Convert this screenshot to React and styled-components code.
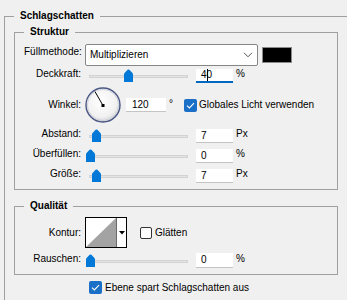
import styled, {createGlobalStyle} from "styled-components";

const GlobalStyle = createGlobalStyle`
  html, body {
    margin: 0;
    background: #f0f0f0;
    overflow: hidden;
  }
  body {
    font-family: "Liberation Sans", Arial, sans-serif;
    font-size: 10px;
    color: #000;
  }
`

const Page = styled.div`
  padding: 10px 0 0 4px;
  height: 300px;
  box-sizing: border-box;
`

const Group = styled.fieldset`
  box-sizing: border-box;
  margin: ${props => props.$gap || 0}px 0 0 0;
  padding: ${props => props.$pt}px 9px ${props => props.$pb}px 9px;
  border: 1px solid #a0a0a0;
  width: ${props => props.$width}px;
  min-width: 0;
`

// outer box runs off the right and bottom of the window
const OuterGroup = styled(Group)`
  border-right: none;
  border-bottom: none;
  height: 290px;
`

const Title = styled.legend`
  padding: 0 6px;
  font-weight: bold;
  line-height: 12px;
  font-size: 10px;
`

const Row = styled.div`
  display: flex;
  align-items: center;
  height: ${props => props.$h}px;
  margin-top: ${props => props.$mt || 0}px;
`

const Label = styled.div`
  width: 57px;
  margin-right: 4px;
  text-align: right;
  line-height: 12px;
  white-space: nowrap;
  align-self: ${props => props.$top ? "flex-start" : "center"};
  padding-top: ${props => props.$top ? 2 : 0}px;
  padding-bottom: ${props => props.$shift ? 4 : 0}px;
`

const Select = styled.div`
  box-sizing: border-box;
  width: 173px;
  height: 22px;
  border: 1px solid #868686;
  border-radius: 2px;
  background: #fff;
  display: flex;
  align-items: center;
  justify-content: space-between;
  padding: 0 4px 0 4px;
  line-height: 12px;
`

const Swatch = styled.div`
  box-sizing: border-box;
  width: 30px;
  height: 16px;
  margin-left: 4px;
  border: 1px solid #8a8a8a;
  background: #000;
`

const SliderBox = styled.div`
  position: relative;
  width: 104px;
  height: 14px;
  margin-left: 1px;
`

const Track = styled.div`
  position: absolute;
  left: 3px;
  right: 2px;
  top: 6px;
  height: 3px;
  box-sizing: border-box;
  background: #e4e4e4;
  border: 1px solid #d2d2d2;
`

const Thumb = styled.svg`
  position: absolute;
  top: 0;
  width: 9px;
  height: 13px;
`

const Field = styled.div`
  box-sizing: border-box;
  width: ${props => props.$w}px;
  height: ${props => props.$h || 14}px;
  margin-left: ${props => props.$ml}px;
  background: #fff;
  border-bottom: ${props => props.$focus ? "2px solid #0067c0" : "1px solid #c4c4c4"};
  padding-left: ${props => props.$pl || 5}px;
  line-height: 14px;
  display: flex;
  align-items: center;
  white-space: nowrap;
`

const Caret = styled.span`
  display: inline-block;
  width: 1px;
  height: 12px;
  margin: 0 -1px 0 0;
  background: #000;
`

const Unit = styled.div`
  margin-left: 3px;
  line-height: 12px;
  padding-bottom: ${props => props.$raise ?? 4}px;
`

const Check = styled.div`
  box-sizing: border-box;
  width: ${props => props.$size}px;
  height: ${props => props.$size}px;
  margin-left: ${props => props.$ml}px;
  border-radius: 2px;
  background: ${props => props.$on ? "#1b6fc6" : "#fdfdfd"};
  border: ${props => props.$on ? "none" : "1px solid #333"};
  display: flex;
  align-items: center;
  justify-content: center;
  flex: none;
`

const CheckText = styled.div`
  margin-left: ${props => props.$ml || 2}px;
  line-height: 12px;
  white-space: nowrap;
`

const Kontur = styled.div`
  box-sizing: border-box;
  width: 42px;
  height: 31px;
  border: 1px solid #000;
  background: #fff;
  display: flex;
`

const KonturPreview = styled.svg`
  width: 30px;
  height: 29px;
  border-right: 1px solid #6b6b6b;
`

const KonturArrow = styled.div`
  flex: 1;
  display: flex;
  align-items: center;
  justify-content: center;
`

const BottomRow = styled.div`
  display: flex;
  align-items: center;
  height: 13px;
  margin-top: 6px;
  padding-left: 75px;
`

function Slider({value}) {
    return (
        <SliderBox>
            <Track/>
            <Thumb viewBox="0 0 9 13" style={{left: Math.round(value * 95)}}>
                <path d="M0 13 L0 5.5 Q0 4.5 0.8 3.7 L3.6 0.8 Q4.5 0 5.4 0.8 L8.2 3.7 Q9 4.5 9 5.5 L9 13 Z" fill="#0078d7"/>
            </Thumb>
        </SliderBox>
    )
}

function Tick() {
    return (
        <svg width="9" height="7" viewBox="0 0 9 7">
            <path d="M1 3.6 L3.4 6 L8 1.2" stroke="#fff" strokeWidth="1.1" fill="none"/>
        </svg>
    )
}

function Dial() {
    return (
        <svg width="36" height="36" viewBox="0 0 36 36">
            <defs>
                <radialGradient id="dialFill" cx="45%" cy="40%" r="60%">
                    <stop offset="0%" stopColor="#ffffff"/>
                    <stop offset="75%" stopColor="#f1f1f1"/>
                    <stop offset="100%" stopColor="#d4d4d8"/>
                </radialGradient>
            </defs>
            <circle cx="18" cy="18" r="17" fill="url(#dialFill)" stroke="#4b5784" strokeWidth="1.4"/>
            <circle cx="18" cy="18" r="15.6" fill="none" stroke="#c9ccd6" strokeWidth="0.8"/>
            <line x1="18" y1="18.5" x2="10" y2="4.6" stroke="#000" strokeWidth="1"/>
            <rect x="16.5" y="17" width="3" height="3" fill="#000"/>
        </svg>
    )
}

function App() {
    return (
        <>
            <GlobalStyle/>
            <Page>
                <OuterGroup $width={343} $pt={4} $pb={0}>
                    <Title>Schlagschatten</Title>

                    <Group $width={324} $pt={6} $pb={6}>
                        <Title>Struktur</Title>
                        <Row $h={22}>
                            <Label $top>Füllmethode:</Label>
                            <Select>
                                <span>Multiplizieren</span>
                                <svg width="10" height="6" viewBox="0 0 10 6">
                                    <path d="M1 0.8 L5 4.8 L9 0.8" stroke="#555" strokeWidth="1" fill="none"/>
                                </svg>
                            </Select>
                            <Swatch/>
                        </Row>
                        <Row $h={14} $mt={3}>
                            <Label $shift>Deckkraft:</Label>
                            <Slider value={0.4}/>
                            <Field $w={37} $ml={6} $focus>4<Caret/>0</Field>
                            <Unit>%</Unit>
                        </Row>
                        <Row $h={36} $mt={4}>
                            <Label>Winkel:</Label>
                            <Dial/>
                            <Field $w={40} $ml={5} $pl={6}>120</Field>
                            <Unit $raise={2}>°</Unit>
                            <Check $size={13} $ml={11} $on><Tick/></Check>
                            <CheckText>Globales Licht verwenden</CheckText>
                        </Row>
                        <Row $h={14} $mt={6}>
                            <Label $shift>Abstand:</Label>
                            <Slider value={0.065}/>
                            <Field $w={37} $ml={6}>7</Field>
                            <Unit>Px</Unit>
                        </Row>
                        <Row $h={14} $mt={6}>
                            <Label $shift>Überfüllen:</Label>
                            <Slider value={0}/>
                            <Field $w={37} $ml={6}>0</Field>
                            <Unit>%</Unit>
                        </Row>
                        <Row $h={14} $mt={6}>
                            <Label $shift>Größe:</Label>
                            <Slider value={0.065}/>
                            <Field $w={37} $ml={6}>7</Field>
                            <Unit>Px</Unit>
                        </Row>
                    </Group>

                    <Group $width={324} $pt={5} $pb={6} $gap={10}>
                        <Title>Qualität</Title>
                        <Row $h={31}>
                            <Label>Kontur:</Label>
                            <Kontur>
                                <KonturPreview viewBox="0 0 30 29">
                                    <path d="M0 29 L30 0 L30 29 Z" fill="#a3a3a3"/>
                                </KonturPreview>
                                <KonturArrow>
                                    <svg width="6" height="4" viewBox="0 0 6 4">
                                        <path d="M0 0 L6 0 L3 3.5 Z" fill="#000"/>
                                    </svg>
                                </KonturArrow>
                            </Kontur>
                            <Check $size={12} $ml={13}/>
                            <CheckText $ml={3}>Glätten</CheckText>
                        </Row>
                        <Row $h={15} $mt={5}>
                            <Label $shift>Rauschen:</Label>
                            <Slider value={0}/>
                            <Field $w={37} $ml={6} $h={15}>0</Field>
                            <Unit>%</Unit>
                        </Row>
                    </Group>

                    <BottomRow>
                        <Check $size={13} $ml={0} $on><Tick/></Check>
                        <CheckText $ml={3}>Ebene spart Schlagschatten aus</CheckText>
                    </BottomRow>
                </OuterGroup>
            </Page>
        </>
    );
}

export default App;
